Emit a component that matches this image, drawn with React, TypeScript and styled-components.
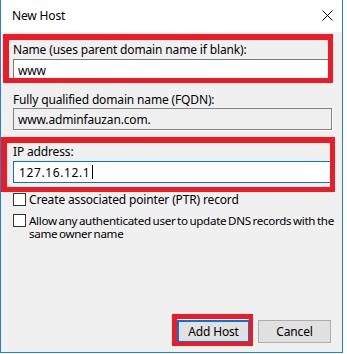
import React from "react";
import styled, { createGlobalStyle } from "styled-components";

const Global = createGlobalStyle`
  html, body { margin: 0; padding: 0; background: #ffffff; }
  body {
    font-family: "Segoe UI", "Noto Sans", "Open Sans", sans-serif;
    font-size: 12px;
    letter-spacing: -0.15px;
    color: #000;
  }
`;

const Window = styled.div`
  width: 343px;
  height: 353px;
  box-sizing: border-box;
  border: 1px solid #2a7ed3;
  border-top: none;
  background: #f0f0f0;
  display: flex;
  flex-direction: column;
`;

const TitleBar = styled.div`
  height: 32px;
  background: #ffffff;
  display: flex;
  align-items: center;
  justify-content: space-between;
  padding: 0 9px 0 10px;
  flex-shrink: 0;
`;

const Title = styled.div`
  font-size: 12px;
  line-height: 16px;
  margin-top: -1px;
  margin-left: 1px;
`;

const CloseButton = styled.div`
  width: 12px;
  height: 12px;
  display: flex;
  align-items: center;
  justify-content: center;
  margin-top: -1px;
`;

const Body = styled.div`
  flex: 1;
  display: flex;
  flex-direction: column;
  padding: 10px 10px 9px 12px;
`;

const Field = styled.div<{ $mt?: number }>`
  position: relative;
  display: flex;
  flex-direction: column;
  margin-top: ${(p) => p.$mt ?? 0}px;
`;

const Highlight = styled.div<{
  $t: number; $r: number; $b: number; $l: number;
  $wt: number; $wr: number; $wb: number; $wl: number;
}>`
  position: absolute;
  top: ${(p) => p.$t}px;
  right: ${(p) => p.$r}px;
  bottom: ${(p) => p.$b}px;
  left: ${(p) => p.$l}px;
  border-style: solid;
  border-color: #ed1c24;
  border-width: ${(p) => `${p.$wt}px ${p.$wr}px ${p.$wb}px ${p.$wl}px`};
  pointer-events: none;
  z-index: 2;
`;

const Label = styled.div`
  line-height: 15px;
  height: 15px;
  white-space: nowrap;
`;

const TextBox = styled.div<{ $variant: "normal" | "readonly" | "focus" }>`
  height: 22px;
  box-sizing: border-box;
  margin-top: ${(p) => (p.$variant === "readonly" ? 1 : 2)}px;
  border: 1px solid
    ${(p) => (p.$variant === "focus" ? "#0078d7" : p.$variant === "readonly" ? "#838383" : "#7a7a7a")};
  background: ${(p) => (p.$variant === "readonly" ? "#f0f0f0" : "#ffffff")};
  box-shadow: ${(p) => (p.$variant === "readonly" ? "1px 1px 0 #ffffff" : "none")};
  display: flex;
  align-items: center;
  padding-left: 4px;
  white-space: nowrap;
`;

const IpText = styled.span`
  letter-spacing: 0.6px;
  padding-left: 1px;
`;

const Caret = styled.span`
  display: inline-block;
  width: 1px;
  height: 14px;
  background: #000;
  margin-left: 2px;
`;

const CheckRow = styled.label<{ $mt: number }>`
  display: flex;
  align-items: flex-start;
  gap: 3px;
  margin-top: ${(p) => p.$mt}px;
  margin-right: -8px;
  line-height: 13px;
`;

const Box = styled.span`
  width: 13px;
  height: 13px;
  box-sizing: border-box;
  border: 1px solid #333333;
  background: #ffffff;
  flex-shrink: 0;
`;

const CheckText = styled.span<{ $tight?: boolean }>`
  flex: 1;
  font-size: ${(p) => (p.$tight ? "11.6px" : "12px")};
  letter-spacing: ${(p) => (p.$tight ? "-0.3px" : "-0.15px")};
  word-spacing: ${(p) => (p.$tight ? "-1px" : "0")};
`;

const ButtonRow = styled.div`
  margin-top: auto;
  display: flex;
  justify-content: flex-end;
  gap: 8px;
  padding-right: 1px;
`;

const ButtonWrap = styled.div`
  position: relative;
  display: flex;
`;

const Button = styled.div<{ $default?: boolean }>`
  width: 73px;
  height: 23px;
  box-sizing: border-box;
  background: #e1e1e1;
  border: ${(p) => (p.$default ? "2px solid #0078d7" : "1px solid #adadad")};
  display: flex;
  align-items: center;
  justify-content: center;
  line-height: 15px;
`;

export default function App() {
  return (
    <>
      <Global />
      <Window>
        <TitleBar>
          <Title>New Host</Title>
          <CloseButton>
            <svg width="11" height="11" viewBox="0 0 11 11">
              <path d="M0.5 0.5 L10.5 10.5 M10.5 0.5 L0.5 10.5" stroke="#000" strokeWidth="1" />
            </svg>
          </CloseButton>
        </TitleBar>
        <Body>
          <Field>
            <Label>Name (uses parent domain name if blank):</Label>
            <TextBox $variant="normal">www</TextBox>
            <Highlight $t={-8} $r={-1} $b={-2} $l={-10} $wt={6} $wr={5} $wb={5} $wl={6} />
          </Field>
          <Field $mt={11}>
            <Label>Fully qualified domain name (FQDN):</Label>
            <TextBox $variant="readonly">www.adminfauzan.com.</TextBox>
          </Field>
          <Field $mt={14}>
            <Label>IP address:</Label>
            <TextBox $variant="focus">
              <IpText>127.16.12.1</IpText>
              <Caret />
            </TextBox>
            <Highlight $t={-7} $r={-3} $b={-9} $l={-12} $wt={6} $wr={5} $wb={5} $wl={6} />
          </Field>
          <CheckRow $mt={10}>
            <Box />
            <CheckText>Create associated pointer (PTR) record</CheckText>
          </CheckRow>
          <CheckRow $mt={8}>
            <Box />
            <CheckText $tight>Allow any authenticated user to update DNS records with the same owner name</CheckText>
          </CheckRow>
          <ButtonRow>
            <ButtonWrap>
              <Button $default>Add Host</Button>
              <Highlight $t={-6} $r={-3} $b={-3} $l={-5} $wt={5} $wr={4} $wb={4} $wl={5} />
            </ButtonWrap>
            <Button>Cancel</Button>
          </ButtonRow>
        </Body>
      </Window>
    </>
  );
}
